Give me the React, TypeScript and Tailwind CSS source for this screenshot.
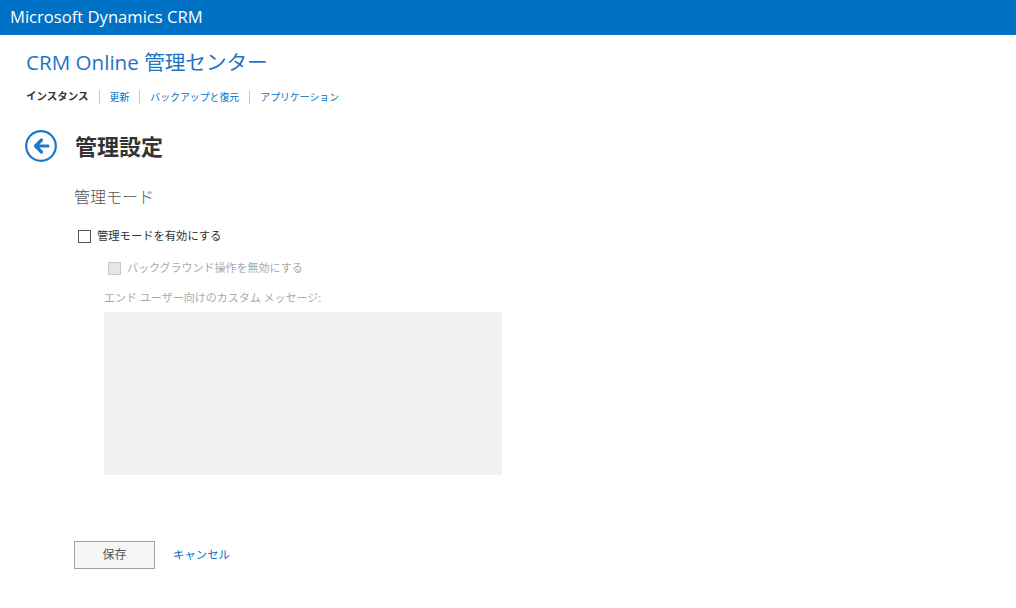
import type { ReactNode } from 'react';

const jp = '"Open Sans", "Noto Sans CJK JP", sans-serif';

function NavItem({ children, active = false, last = false }: { children: ReactNode; active?: boolean; last?: boolean }) {
  return (
    <span className="flex items-center">
      <span className={active ? 'text-[10.5px] font-bold text-[#333]' : 'text-[#0072c6]'}>{children}</span>
      {last ? null : <span className="mx-[10px] h-[14px] w-px bg-[#c8c8c8]" />}
    </span>
  );
}

function BackIcon() {
  return (
    <svg width="32" height="32" viewBox="0 0 32 32" fill="none">
      <circle cx="16" cy="16" r="14.8" stroke="#1e78c8" strokeWidth="2.2" />
      <path d="M23 16H10.5M16.5 10L10.5 16L16.5 22" stroke="#1e78c8" strokeWidth="3.2" strokeLinecap="round" strokeLinejoin="round" />
    </svg>
  );
}

export default function App() {
  return (
    <div className="min-h-[608px] w-[1016px] bg-white" style={{ fontFamily: jp }}>
      <div className="flex h-[35px] items-center bg-[#0072c6] px-[10px] text-[16.6px] text-white">
        Microsoft Dynamics CRM
      </div>
      <div className="pl-[26px]">
        <div className="mt-[13px] text-[20.6px] leading-[28px] text-[#1f74c4]">CRM Online 管理センター</div>
        <nav className="mt-[13px] flex h-[16px] items-center text-[9.9px]">
          <NavItem active>インスタンス</NavItem>
          <NavItem>更新</NavItem>
          <NavItem>バックアップと復元</NavItem>
          <NavItem last>アプリケーション</NavItem>
        </nav>
        <div className="ml-[-1px] mt-[25px] flex items-center gap-[18px]">
          <BackIcon />
          <h1 className="text-[22px] font-bold leading-[32px] text-[#333]">管理設定</h1>
        </div>
        <div className="pl-[48px]">
          <h2 className="mt-[24px] text-[16px] font-light leading-[22px] text-[#555]">管理モード</h2>
          <label className="mt-[20px] flex items-center gap-[6px] text-[11.3px] leading-[16px] text-[#333]">
            <span className="ml-[4px] h-[13px] w-[13px] border border-[#555] bg-white" />
            管理モードを有効にする
          </label>
          <label className="ml-[34px] mt-[16px] flex items-center gap-[6px] text-[11px] leading-[16px] text-[#aaa]">
            <span className="h-[13px] w-[13px] border border-[#c6c6c6] bg-[#e6e6e6]" />
            バックグラウンド操作を無効にする
          </label>
          <div className="ml-[30px] mt-[14px] text-[11px] leading-[16px] text-[#aaa]">
            エンド ユーザー向けのカスタム メッセージ:
          </div>
          <div className="ml-[30px] mt-[6px] h-[163px] w-[398px] bg-[#f1f1f1]" />
          <div className="mt-[66px] flex items-center gap-[18px]">
            <button
              type="button"
              className="h-[28px] w-[81px] border border-[#9ea3a3] bg-[#f6f6f6] text-[12px] text-[#555]"
            >
              保存
            </button>
            <span className="text-[11.4px] text-[#0072c6]">キャンセル</span>
          </div>
        </div>
      </div>
    </div>
  );
}
